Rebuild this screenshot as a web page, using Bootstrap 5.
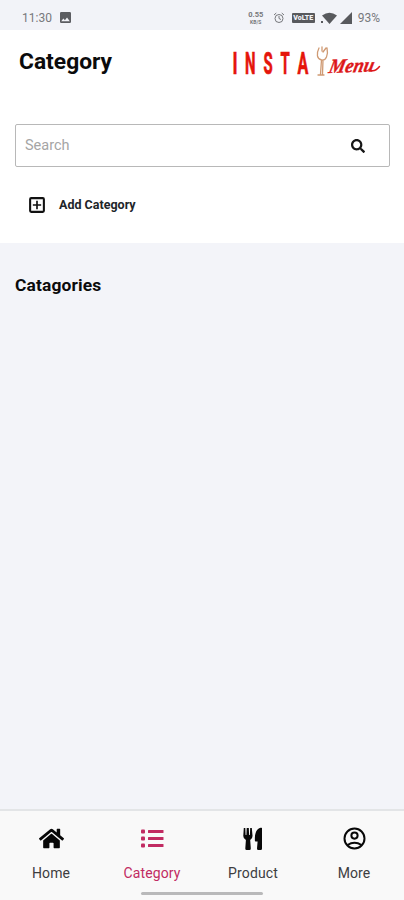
<!DOCTYPE html>
<html lang="en">
<head>
<meta charset="utf-8">
<meta name="viewport" content="width=device-width, initial-scale=1">
<title>Category</title>
<link href="https://cdn.jsdelivr.net/npm/bootstrap@5.3.0/dist/css/bootstrap.min.css" rel="stylesheet">
<style>
body{font-family:Roboto,sans-serif;background:#f3f4f9;color:#0b0b0c;height:900px;overflow:hidden}
svg{display:block;flex:none;overflow:visible}
.status{height:30px;background:#f2f3f8;color:#77787c;font-size:12px;padding:5px 24px 0 22px}
.rate{font-size:7.500px;line-height:8px;font-weight:700;width:18px}
.rate small{font-size:5px;line-height:6px;display:block}
.volte{width:23px;height:10px;font-size:7px;line-height:10px;background:#58595d;color:#f2f3f8;font-weight:900;border-radius:1px;margin:0 6px 0 7px}
.signal{margin:0 6px 0 2px}
.top-panel{height:213px;padding:0 14px 0 15px}
.title-row{height:64px;padding-left:4px;padding-right:8px}
.title-row h1{font-size:22.800px;font-weight:700;line-height:26px;padding-bottom:1px}
.search-box{height:43px;margin-top:30px;border:1px solid #b8b8b8;border-radius:2px;padding:0 24px 0 9px}
.search-box input{font-size:14.500px;color:#555}
.search-box input::placeholder{color:#a5a5a5;opacity:1}
.add-btn{font-size:12.500px;font-weight:700;margin:28px 0 0 12px;gap:12px;line-height:20px}
h2.section{font-size:17.400px;font-weight:700;padding:32px 15px 0;letter-spacing:.15px;line-height:20px}
.tabs{height:91px;background:#f9f9f9;border-top:2px solid #e3e5e7}
.tabs a{color:#3d3d3f;font-size:14px;line-height:18px;padding:15px 0 0 1px;gap:13px;letter-spacing:.12px;width:101px;flex:none}
.tabs a svg{color:#080808}
.tabs a.active,.tabs a.active svg{color:#c12b62}
.handle{width:122px;height:3px;border-radius:2px;background:#b9b9ba;left:141px;bottom:5px}
</style>
<script src="https://cdn.jsdelivr.net/npm/bootstrap@5.3.0/dist/js/bootstrap.bundle.min.js"></script>
</head>
<body class="d-flex flex-column">
<div class="status d-flex align-items-center">
  <span>11:30</span>
  <svg class="ms-2" width="11" height="11" viewBox="0 0 18 18" fill="#5c5d61"><path d="M18 16V2a2 2 0 0 0-2-2H2a2 2 0 0 0-2 2v14c0 1.100.9 2 2 2h14a2 2 0 0 0 2-2zM5.500 10.500l2.500 3 3.500-4.500 4.500 6H2z"/></svg>
  <div class="rate ms-auto text-center">0.55<small>KB/S</small></div>
  <svg class="ms-2" width="12" height="12" viewBox="0 0 24 24" fill="none" stroke="#77787c" stroke-width="2"><circle cx="12" cy="13" r="8"/><path d="M12 8v5l4 2M2 6l4.500-4M22 6l-4.500-4"/></svg>
  <div class="volte text-center">VoLTE</div>
  <svg width="17" height="12" viewBox="0 0 17 12" fill="#58595d"><path d="M1 3.500Q8.500-2 16 3.500L8.500 12z"/><path d="M0 9h2v2H0z"/></svg>
  <svg class="signal" width="12" height="12" viewBox="0 0 12 12" fill="#58595d"><path d="M12 0v12H0z"/></svg>
  <span>93%</span>
</div>
<header class="top-panel bg-white">
  <div class="title-row d-flex align-items-center justify-content-between">
    <h1 class="mb-0">Category</h1>
    <svg width="150" height="36" viewBox="0 0 150 36" role="img" aria-label="Insta Menu">
      <g fill="#e5150b" stroke="#e5150b" stroke-width=".7" font-family="Roboto,sans-serif" font-weight="700" font-size="31">
        <text transform="translate(.5 29.500) scale(.56 1)">I</text>
        <text transform="translate(13 29.500) scale(.48 1)">N</text>
        <text transform="translate(31.500 29.500) scale(.48 1)">S</text>
        <text transform="translate(48.500 29.500) scale(.48 1)">T</text>
        <text transform="translate(65.500 29.500) scale(.52 1)">A</text>
      </g>
      <g fill="none" stroke="#cf9a73" stroke-width="1.300" stroke-linecap="round"><path d="M87 4c-3 6-2 11 2.500 12s7-5 5.500-12M89.500 16l-1 14M91 16l-.5 14M86 31h6M90 3v4M94 4l-3 4"/></g>
      <g fill="#dd1719" stroke="#dd1719" stroke-width=".4" font-family="'Liberation Serif',serif" font-style="italic" font-weight="700">
        <text transform="translate(96 29) rotate(-2) skewX(-14)" font-size="20" textLength="45" lengthAdjust="spacingAndGlyphs">Menu</text>
      </g>
      <path d="M139 26.500q4 1.500 8.500-4" fill="none" stroke="#dd1719" stroke-width="1.500" stroke-linecap="round"/>
    </svg>
  </div>
  <div class="search-box d-flex align-items-center">
    <input class="form-control border-0 shadow-none bg-transparent p-0" type="text" placeholder="Search" aria-label="Search">
    <svg width="14" height="14" viewBox="0 0 512 512" fill="#171717"><path d="M505 442.700L405.300 343c-4.500-4.500-10.600-7-17-7H372c27.600-35.300 44-79.700 44-128C416 93.100 322.900 0 208 0S0 93.100 0 208s93.100 208 208 208c48.300 0 92.700-16.400 128-44v16.300c0 6.400 2.500 12.500 7 17l99.700 99.700c9.400 9.400 24.600 9.400 33.900 0l28.300-28.300c9.400-9.400 9.400-24.600.1-34zM208 336c-70.700 0-128-57.200-128-128 0-70.700 57.200-128 128-128 70.700 0 128 57.200 128 128 0 70.700-57.200 128-128 128z"/></svg>
  </div>
  <button class="add-btn btn p-0 border-0 d-flex align-items-center" type="button">
    <svg width="20" height="20" viewBox="0 0 24 24" fill="#111"><path d="M19 2.500H5A2.500 2.500 0 0 0 2.500 5v14A2.500 2.500 0 0 0 5 21.500h14a2.500 2.500 0 0 0 2.500-2.500V5A2.500 2.500 0 0 0 19 2.500zm0 16.500H5V5h14v14zm-8-2h2v-4h4v-2h-4V7h-2v4H7v2h4z"/></svg>
    Add Category
  </button>
</header>
<main class="flex-grow-1">
  <h2 class="section mb-0">Catagories</h2>
</main>
<nav class="tabs d-flex position-relative">
  <a href="#" class="d-flex flex-column align-items-center text-decoration-none">
    <svg width="25" height="25" viewBox="0 0 576 512" fill="currentColor"><path d="M280.400 148.300L96 300.100V464a16 16 0 0 0 16 16l112.100-.3a16 16 0 0 0 15.900-16V368a16 16 0 0 1 16-16h64a16 16 0 0 1 16 16v95.600a16 16 0 0 0 16 16.100L464 480a16 16 0 0 0 16-16V300L295.700 148.300a12.200 12.200 0 0 0-15.300 0zM571.600 251.500L488 182.600V44a12 12 0 0 0-12-12h-56a12 12 0 0 0-12 12v72.600L318.500 43a48 48 0 0 0-61 0L4.300 251.500a12 12 0 0 0-1.600 16.900l25.500 31a12 12 0 0 0 16.900 1.600L280.400 107.200a12.200 12.200 0 0 1 15.300 0L530.900 301a12 12 0 0 0 16.900-1.600l25.500-31a12 12 0 0 0-1.700-16.900z"/></svg>
    Home
  </a>
  <a href="#" class="active d-flex flex-column align-items-center text-decoration-none" aria-current="page">
    <svg width="24" height="25" viewBox="0 0 24 25" fill="currentColor"><rect x="1" y="3.500" width="4" height="4" rx="1"/><rect x="1" y="10.500" width="4" height="4" rx="1"/><rect x="1" y="17.500" width="4" height="4" rx="1"/><rect x="8" y="4" width="15.500" height="3" rx=".5"/><rect x="8" y="11" width="15.500" height="3" rx=".5"/><rect x="8" y="18" width="15.500" height="3" rx=".5"/></svg>
    Category
  </a>
  <a href="#" class="d-flex flex-column align-items-center text-decoration-none">
    <svg width="20" height="25" viewBox="0 0 20 25" fill="currentColor"><path d="M.8 2h1.500l.3 7h.8L3.700 2h2.100l.3 7h.8l.3-7h1.600l.7 7.500q.2 3-2.300 4.500l.6 8.500q0 1.500-1.300 1.500H3.600q-1.300 0-1.300-1.500l.6-8.500Q.1 12.500.3 9.500zM19 2v20.500q0 1.500-1.300 1.500h-2.400Q14 24 14 22.500l.6-7h-2q-.8 0-.7-1C11.500 8 13.500 2.500 17.500 1.800Q19 1.500 19 2z"/></svg>
    Product
  </a>
  <a href="#" class="d-flex flex-column align-items-center text-decoration-none">
    <svg width="25" height="25" viewBox="0 0 24 24" fill="none" stroke="currentColor" stroke-width="1.900"><circle cx="12" cy="12" r="9.600"/><circle cx="12" cy="9.200" r="3"/><path d="M5.300 18.200q6.700-4.400 13.400 0"/></svg>
    More
  </a>
  <div class="handle position-absolute"></div>
</nav>
</body>
</html>
